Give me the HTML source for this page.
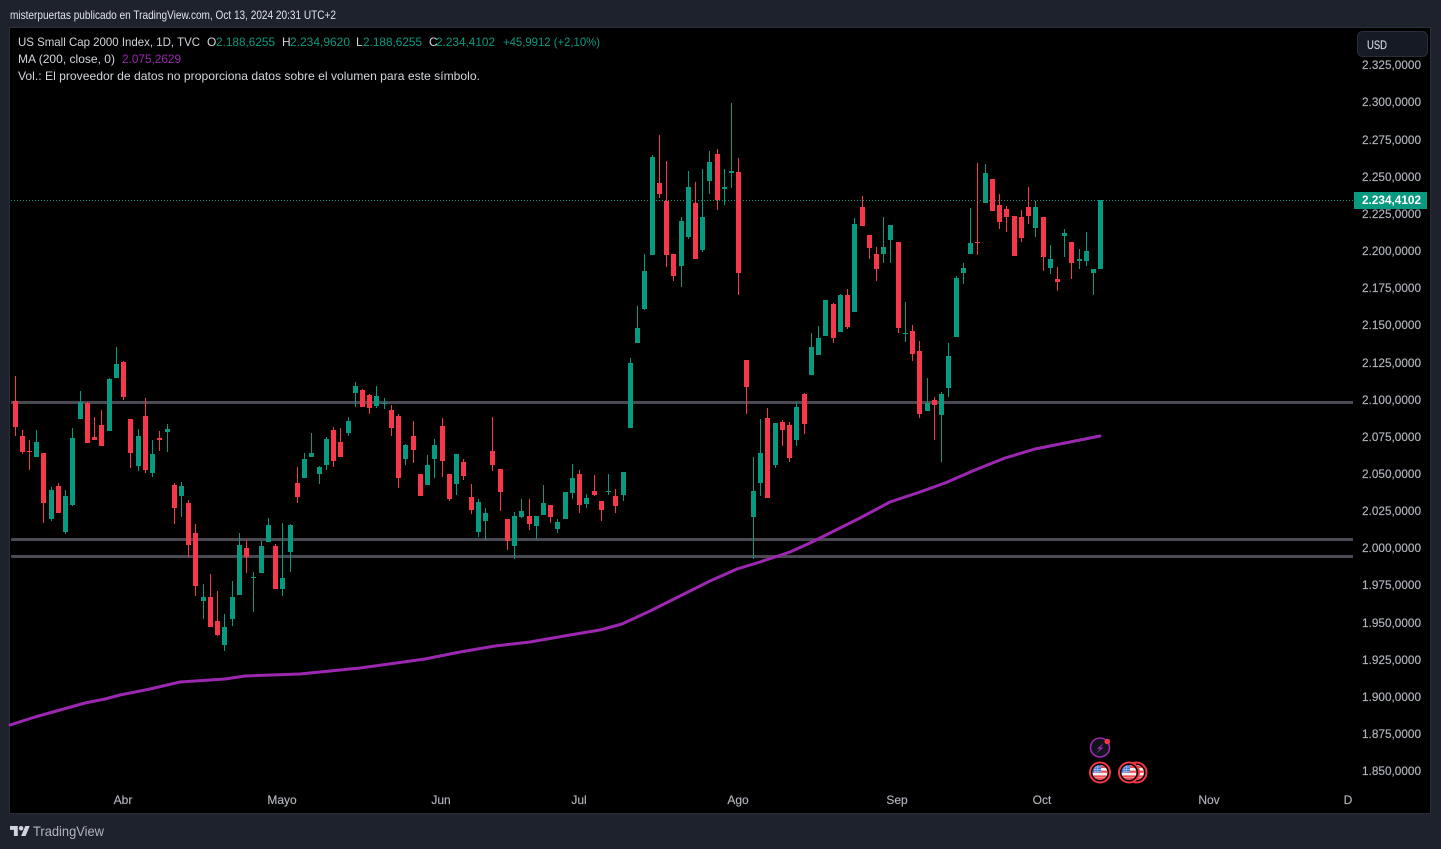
<!DOCTYPE html>
<html lang="es">
<head>
<meta charset="utf-8">
<title>US Small Cap 2000 Index</title>
<style>
html,body{margin:0;padding:0;background:#1e222d;width:1441px;height:849px;overflow:hidden}
svg{display:block;position:absolute;left:0;top:0}
text{font-family:"Liberation Sans",sans-serif;font-size:12px;fill:#d1d4dc}
.ax{fill:#b2b5be;stroke:#b2b5be;stroke-width:.15}
.up{fill:#089981}
</style>
</head>
<body>
<svg width="1441" height="849" viewBox="0 0 1441 849" xmlns="http://www.w3.org/2000/svg">
<defs>
<clipPath id="fc1"><circle cx="1100" cy="772.500" r="7.500"/></clipPath>
<clipPath id="fc2"><circle cx="1129" cy="772.500" r="7.500"/></clipPath>
<clipPath id="fc3"><circle cx="1136.500" cy="772.500" r="7.500"/></clipPath>
<g id="flag">
<rect x="-8" y="-8" width="16" height="16" fill="#f0f0f0"/>
<path d="M-8-5.600H8M-8-.8H8M-8 4H8M-8 6.600H8" stroke="#f0494f" stroke-width="2.200"/>
<rect x="-8" y="-8" width="9" height="8" fill="#3d6fd0"/>
<path d="M-6-5.500h7M-6-3h7M-6-.8h7M-5-7v7M-2.500-7v7" stroke="#a9c4f0" stroke-width=".7"/>
</g>
</defs>
<rect width="1441" height="849" fill="#1e222d"/>
<text x="10" y="19" textLength="326" lengthAdjust="spacingAndGlyphs" style="fill:#e0e3eb">misterpuertas publicado en TradingView.com, Oct 13, 2024 20:31 UTC+2</text>

<rect x="9.500" y="27.500" width="1421" height="786" fill="#000" stroke="#2a2e39"/>

<g shape-rendering="crispEdges">
<path d="M11 402.500H1353M11 539.500H1353M11 556.500H1353" stroke="#4a4a55" stroke-width="3"/>
<path d="M11 200.500H1353" stroke="#089981" stroke-width="1" stroke-dasharray="1 2"/>
<g stroke="#f7374b" fill="none">
<path stroke-width="1" d="M15.5 376V436M22.5 430V454M29.5 440V470M43.5 453V523M58.5 483V513M87.5 402V443M94.5 417V440M101.5 410V446M123.5 361V400M130.5 419V468M145.5 398V473M159.5 431V451M174.5 483V524M188.5 500V557M195.5 524V596M210.5 574V627M217.5 591V636M246.5 540V573M275.5 544V589M297.5 467V503M333.5 427V467M340.5 428V457M362.5 389V407M369.5 394V414M391.5 405V436M398.5 414V488M413.5 421V463M420.5 474V496M442.5 418V477M449.5 474V501M463.5 459V480M471.5 484V514M492.5 417V471M500.5 469V511M507.5 519V550M529.5 499V530M550.5 505V523M579.5 470V513M594.5 475V496M601.5 501V521M615.5 489V513M659.5 135V198M666.5 161V267M673.5 254V281M695.5 182V259M717.5 149V210M738.5 158V295M746.5 360V414M767.5 408V498M782.5 420V446M789.5 422V462M804.5 393V434M833.5 303V343M847.5 289V329M862.5 196V226M869.5 235V259M876.5 247V281M898.5 242V333M912.5 325V361M919.5 341V418M934.5 397V440M977.5 163V255M992.5 179V211M999.5 194V229M1006.5 206V232M1014.5 216V256M1021.5 210V242M1028.5 187V224M1043.5 217V271M1057.5 267V291M1071.5 242V279"/>
<path stroke-width="5" d="M15.5 401V427M22.5 436V452M29.5 451V452M43.5 453V503M58.5 486V513M87.5 403V443M94.5 437V440M101.5 425V446M123.5 362V397M130.5 419V453M145.5 416V470M159.5 438V440M174.5 485V508M188.5 503V545M195.5 533V586M210.5 597V627M217.5 621V635M246.5 548V557M275.5 546V589M297.5 483V497M333.5 430V461M340.5 442V457M362.5 390V407M369.5 395V408M391.5 410V428M398.5 416V478M413.5 436V450M420.5 474V496M442.5 426V461M449.5 474V499M463.5 462V476M471.5 497V510M492.5 451V465M500.5 469V492M507.5 519V541M529.5 516V524M550.5 505V517M579.5 474V505M594.5 491V495M601.5 501V510M615.5 496V506M659.5 183V194M666.5 201V255M673.5 254V276M695.5 203V259M717.5 154V200M738.5 172V273M746.5 360V387M767.5 418V498M782.5 422V430M789.5 425V458M804.5 394V424M833.5 304V338M847.5 295V327M862.5 207V226M869.5 235V248M876.5 254V269M898.5 242V328M912.5 331V354M919.5 351V414M934.5 400V405M977.5 242V243M992.5 179V211M999.5 205V222M1006.5 209V217M1014.5 216V256M1021.5 217V238M1028.5 207V216M1043.5 217V257M1057.5 279V282M1071.5 242V263"/>
</g>
<g stroke="#089981" fill="none">
<path stroke-width="1" d="M36.5 430V457M51.5 487V521M65.5 490V534M72.5 428V506M80.5 391V419M109.5 378V431M116.5 347V378M138.5 429V471M152.5 440V477M167.5 424V452M181.5 482V517M203.5 584V619M224.5 614V651M232.5 581V626M239.5 533V595M253.5 572V612M261.5 541V573M268.5 518V542M282.5 523V596M290.5 524V572M304.5 453V478M311.5 433V457M319.5 466V484M326.5 437V470M348.5 417V436M355.5 382V407M376.5 386V408M384.5 398V409M405.5 444V465M427.5 455V485M434.5 439V478M456.5 454V495M478.5 499V537M485.5 508V540M514.5 512V559M521.5 499V518M536.5 516V539M543.5 485V515M557.5 519V533M565.5 492V519M572.5 464V499M586.5 494V508M608.5 474V495M623.5 472V501M630.5 358V428M637.5 306V343M644.5 254V310M652.5 155V255M681.5 217V287M688.5 171V239M702.5 169V252M709.5 151V194M724.5 169V205M731.5 103V188M753.5 457V559M760.5 419V496M775.5 423V468M796.5 402V446M811.5 333V375M818.5 326V355M825.5 300V336M840.5 294V332M854.5 218V312M883.5 217V263M890.5 225V263M905.5 302V342M927.5 378V411M941.5 392V462M948.5 343V397M956.5 276V337M963.5 263V284M970.5 208V254M985.5 164V203M1035.5 201V237M1050.5 245V274M1064.5 229V257M1079.5 249V269M1086.5 232V266M1093.5 269V295M1100.5 200V269"/>
<path stroke-width="5" d="M36.5 442V457M51.5 490V519M65.5 496V532M72.5 438V505M80.5 402V419M109.5 379V431M116.5 364V378M138.5 436V466M152.5 454V473M167.5 429V432M181.5 486V496M203.5 597V601M224.5 627V645M232.5 597V619M239.5 545V595M253.5 577V578M261.5 546V573M268.5 525V542M282.5 578V589M290.5 525V552M304.5 459V478M311.5 453V457M319.5 467V474M326.5 439V465M348.5 421V433M355.5 386V393M376.5 396V406M384.5 403V404M405.5 445V459M427.5 465V485M434.5 445V459M456.5 454V484M478.5 502V532M485.5 513V521M514.5 516V546M521.5 511V517M536.5 516V526M543.5 503V515M557.5 522V529M565.5 492V519M572.5 478V493M586.5 498V504M608.5 491V492M623.5 472V495M630.5 363V428M637.5 328V343M644.5 271V309M652.5 157V255M681.5 221V266M688.5 187V237M702.5 217V250M709.5 162V181M724.5 187V189M731.5 171V173M753.5 491V517M760.5 453V483M775.5 423V465M796.5 407V440M811.5 347V375M818.5 338V355M825.5 300V336M840.5 295V332M854.5 224V312M883.5 247V254M890.5 225V240M905.5 333V334M927.5 403V411M941.5 394V415M948.5 356V388M956.5 278V337M963.5 268V273M970.5 243V254M985.5 173V203M1035.5 207V228M1050.5 259V268M1064.5 233V236M1079.5 259V261M1086.5 251V261M1093.5 269V273M1100.5 200V269"/>
</g>
</g>

<polyline fill="none" stroke="#9c27b0" stroke-width="3" stroke-linejoin="round" stroke-linecap="round" points="10,725 35,717 60,710 85,703 105,699 120,695 150,689 180,682 195,681 225,679 245,676 300,674 360,668 425,659 460,652 495,646 530,642 570,635 600,630 622,624 650,611 680,596 710,581 737,569 760,562 790,552 810,543 840,528 860,518 890,502 920,492 945,483 975,470 1005,458 1035,449 1070,442 1100,436"/>

<!-- legend -->
<text x="18" y="46" textLength="182" lengthAdjust="spacingAndGlyphs">US Small Cap 2000 Index, 1D, TVC</text>
<text x="207" y="46">O</text><text class="up" x="216" y="46" textLength="59" lengthAdjust="spacingAndGlyphs">2.188,6255</text>
<text x="282" y="46">H</text><text class="up" x="290" y="46" textLength="60" lengthAdjust="spacingAndGlyphs">2.234,9620</text>
<text x="356" y="46">L</text><text class="up" x="363" y="46" textLength="59" lengthAdjust="spacingAndGlyphs">2.188,6255</text>
<text x="429" y="46">C</text><text class="up" x="436" y="46" textLength="59" lengthAdjust="spacingAndGlyphs">2.234,4102</text>
<text class="up" x="503" y="46" textLength="97" lengthAdjust="spacingAndGlyphs">+45,9912 (+2,10%)</text>
<text x="18" y="63" textLength="97" lengthAdjust="spacingAndGlyphs">MA (200, close, 0)</text>
<text x="122" y="63" textLength="59" lengthAdjust="spacingAndGlyphs" style="fill:#9c27b0">2.075,2629</text>
<text x="18" y="80" textLength="462" lengthAdjust="spacingAndGlyphs">Vol.: El proveedor de datos no proporciona datos sobre el volumen para este símbolo.</text>

<!-- y axis -->
<g class="yax">
<text class="ax" x="1362" y="69" textLength="59" lengthAdjust="spacingAndGlyphs">2.325,0000</text>
<text class="ax" x="1362" y="106" textLength="59" lengthAdjust="spacingAndGlyphs">2.300,0000</text>
<text class="ax" x="1362" y="144" textLength="59" lengthAdjust="spacingAndGlyphs">2.275,0000</text>
<text class="ax" x="1362" y="181" textLength="59" lengthAdjust="spacingAndGlyphs">2.250,0000</text>
<text class="ax" x="1362" y="218" textLength="59" lengthAdjust="spacingAndGlyphs">2.225,0000</text>
<text class="ax" x="1362" y="255" textLength="59" lengthAdjust="spacingAndGlyphs">2.200,0000</text>
<text class="ax" x="1362" y="292" textLength="59" lengthAdjust="spacingAndGlyphs">2.175,0000</text>
<text class="ax" x="1362" y="329" textLength="59" lengthAdjust="spacingAndGlyphs">2.150,0000</text>
<text class="ax" x="1362" y="367" textLength="59" lengthAdjust="spacingAndGlyphs">2.125,0000</text>
<text class="ax" x="1362" y="404" textLength="59" lengthAdjust="spacingAndGlyphs">2.100,0000</text>
<text class="ax" x="1362" y="441" textLength="59" lengthAdjust="spacingAndGlyphs">2.075,0000</text>
<text class="ax" x="1362" y="478" textLength="59" lengthAdjust="spacingAndGlyphs">2.050,0000</text>
<text class="ax" x="1362" y="515" textLength="59" lengthAdjust="spacingAndGlyphs">2.025,0000</text>
<text class="ax" x="1362" y="552" textLength="59" lengthAdjust="spacingAndGlyphs">2.000,0000</text>
<text class="ax" x="1362" y="589" textLength="59" lengthAdjust="spacingAndGlyphs">1.975,0000</text>
<text class="ax" x="1362" y="627" textLength="59" lengthAdjust="spacingAndGlyphs">1.950,0000</text>
<text class="ax" x="1362" y="664" textLength="59" lengthAdjust="spacingAndGlyphs">1.925,0000</text>
<text class="ax" x="1362" y="701" textLength="59" lengthAdjust="spacingAndGlyphs">1.900,0000</text>
<text class="ax" x="1362" y="738" textLength="59" lengthAdjust="spacingAndGlyphs">1.875,0000</text>
<text class="ax" x="1362" y="775" textLength="59" lengthAdjust="spacingAndGlyphs">1.850,0000</text>
</g>

<!-- price tag -->
<rect x="1354" y="192" width="73" height="17" fill="#089981"/>
<text x="1362" y="204" font-weight="700" textLength="59" lengthAdjust="spacingAndGlyphs" style="fill:#fff">2.234,4102</text>

<!-- USD button -->
<rect x="1357.500" y="31.500" width="70" height="25" rx="5" fill="#161a25" stroke="#2a2e39"/>
<text x="1367" y="49" textLength="20" lengthAdjust="spacingAndGlyphs" style="fill:#d1d4dc;stroke:#d1d4dc;stroke-width:.15">USD</text>

<!-- time axis -->
<g text-anchor="middle">
<text class="ax" x="123" y="804">Abr</text>
<text class="ax" x="282" y="804">Mayo</text>
<text class="ax" x="441" y="804">Jun</text>
<text class="ax" x="579" y="804">Jul</text>
<text class="ax" x="738" y="804">Ago</text>
<text class="ax" x="897" y="804">Sep</text>
<text class="ax" x="1042" y="804">Oct</text>
<text class="ax" x="1209" y="804">Nov</text>
<text class="ax" x="1348" y="804">D</text>
</g>

<!-- event markers -->
<circle cx="1100" cy="747.500" r="9.500" fill="#12141c" stroke="#9c27b0" stroke-width="1.600"/>
<path d="M1104 743L1096.800 748.700H1100L1096.500 753.200L1103.700 747.500H1100.500Z" fill="#9c27b0"/>
<circle cx="1107.300" cy="741.500" r="2.800" fill="#f23645"/>

<circle cx="1100" cy="772.500" r="10" fill="#000" stroke="#f23645" stroke-width="2"/>
<g clip-path="url(#fc1)"><use href="#flag" x="1100" y="772.500"/></g>

<circle cx="1136.500" cy="772.500" r="10" fill="#000" stroke="#f23645" stroke-width="2"/>
<g clip-path="url(#fc3)"><use href="#flag" x="1136.500" y="772.500"/></g>
<circle cx="1129" cy="772.500" r="10" fill="#000" stroke="#f23645" stroke-width="2"/>
<g clip-path="url(#fc2)"><use href="#flag" x="1129" y="772.500"/></g>

<!-- footer logo -->
<g transform="translate(10,823.800) scale(.556)" fill="#d1d4dc">
<path d="M14 22H7V11H0V4h14v18ZM28 22h-8l7.500-18h8L28 22Z"/>
<circle cx="20" cy="8" r="4"/>
</g>
<text x="33" y="836" textLength="71" lengthAdjust="spacingAndGlyphs" style="font-size:14px;fill:#b2b5be">TradingView</text>
</svg>
</body>
</html>
